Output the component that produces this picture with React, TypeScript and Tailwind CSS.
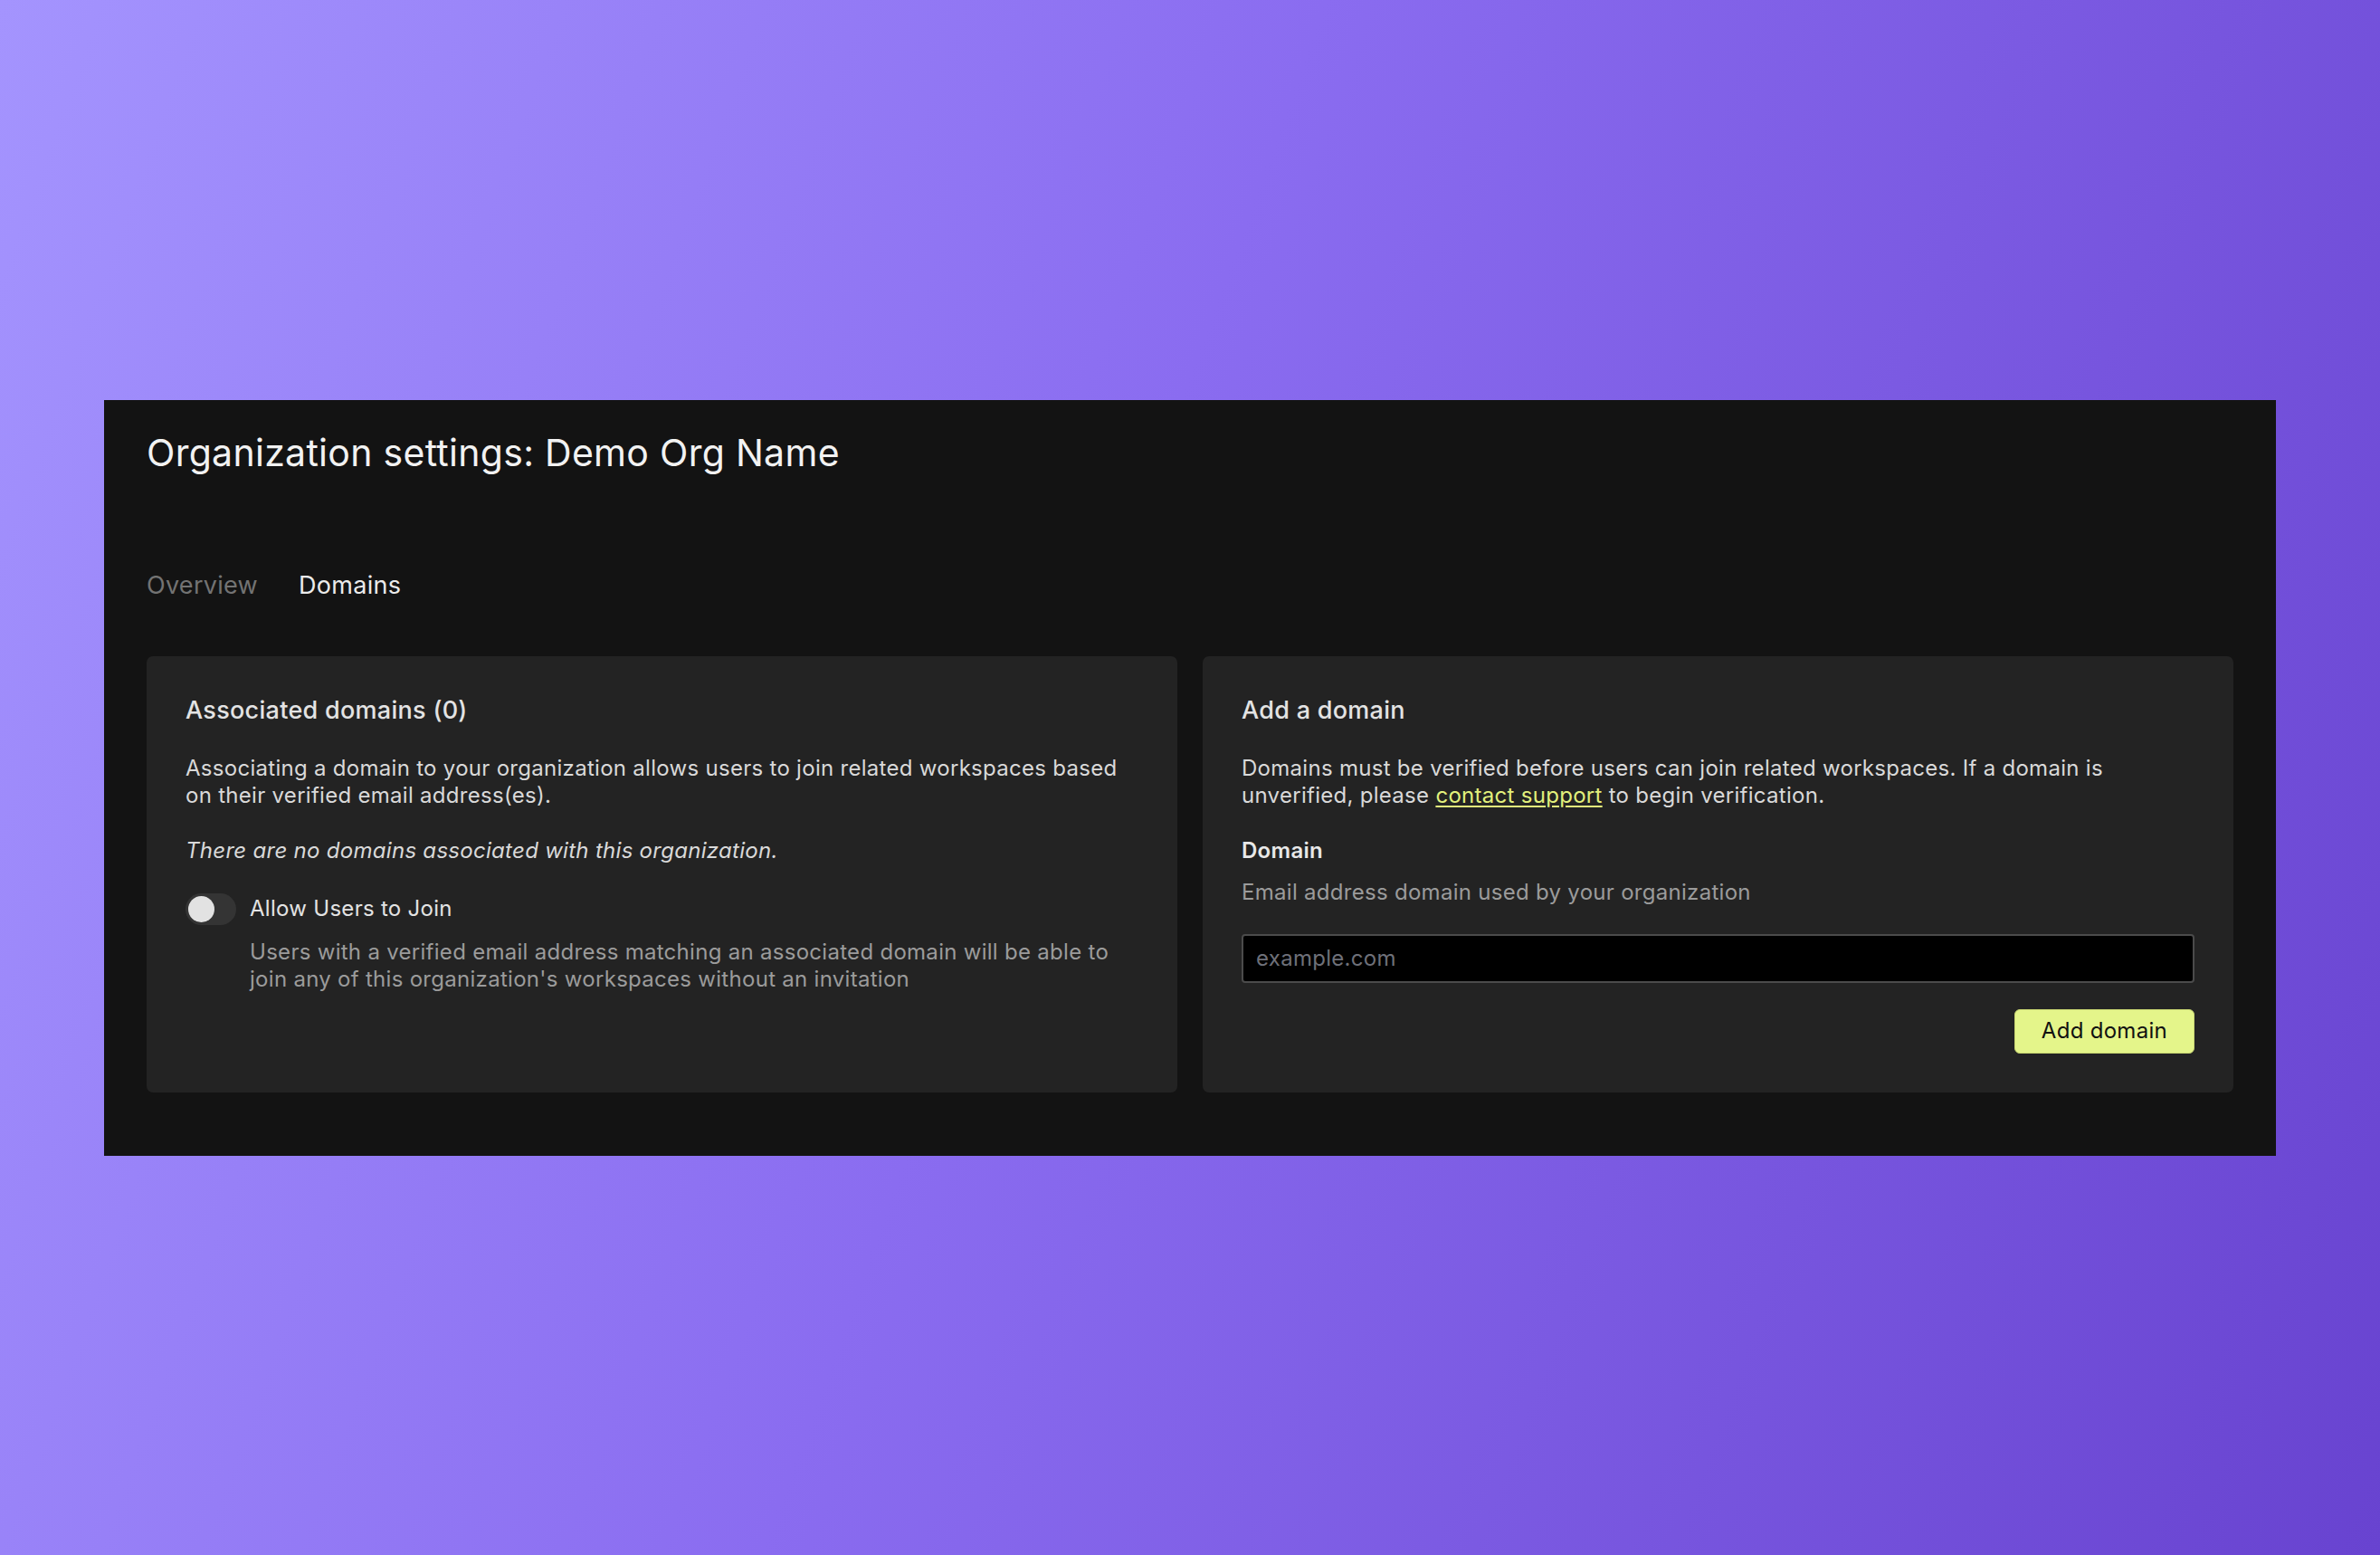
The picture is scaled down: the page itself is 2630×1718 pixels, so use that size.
import { useState } from "react";

const App: React.FC = () => {
  const [allowJoin, setAllowJoin] = useState(false);
  const [tab, setTab] = useState("domains");
  const [domain, setDomain] = useState("");

  return (
    <div className="min-h-screen w-full flex items-center justify-center bg-[linear-gradient(110deg,#a494fe_0%,#8a6cf0_45%,#6843d0_100%)] font-['Inter',sans-serif] tracking-[0.018em]">
      <div className="w-[2400px] bg-[#131313] pt-[28px] px-[47px] pb-[70px]">
        <h1 className="text-[41px] leading-[60px] font-normal text-[#f2f2f2]">
          Organization settings: Demo Org Name
        </h1>

        <div className="mt-[97px] flex gap-[45px] text-[27px] leading-[40px]">
          <button
            onClick={() => setTab("overview")}
            className={tab === "overview" ? "text-[#ebebeb]" : "text-[#737373]"}
          >
            Overview
          </button>
          <button
            onClick={() => setTab("domains")}
            className={tab === "domains" ? "text-[#ebebeb]" : "text-[#737373]"}
          >
            Domains
          </button>
        </div>

        <div className="mt-[58px] grid grid-cols-2 gap-[28px]">
          <div className="rounded-[7px] bg-[#232323] pt-[40px] px-[43px] pb-[43px]">
            <h2 className="text-[27px] leading-[40px] font-medium text-[#e3e3e3]">
              Associated domains (0)
            </h2>
            <p className="mt-[29px] text-[24px] leading-[30px] text-[#d9d9d9]">
              Associating a domain to your organization allows users to join related workspaces based on their verified email address(es).
            </p>
            <p className="mt-[31px] text-[24px] leading-[30px] italic text-[#d9d9d9]">
              There are no domains associated with this organization.
            </p>
            <div className="mt-[32px] flex items-center gap-[15px]">
              <button
                onClick={() => setAllowJoin(!allowJoin)}
                className={`relative h-[35px] w-[56px] shrink-0 rounded-full ${allowJoin ? "bg-[#e4f58a]" : "bg-[#343434]"}`}
              >
                <span
                  className={`absolute top-[3px] h-[29px] w-[29px] rounded-full bg-[#e2e2e2] ${allowJoin ? "left-[24px]" : "left-[3px]"}`}
                ></span>
              </button>
              <span className="text-[24px] leading-[30px] text-[#e3e3e3]">Allow Users to Join</span>
            </div>
            <p className="mt-[15px] pl-[71px] text-[24px] leading-[30px] text-[#9b9b9b]">
              Users with a verified email address matching an associated domain will be able to join any of this organization's workspaces without an invitation
            </p>
          </div>

          <div className="rounded-[7px] bg-[#232323] pt-[40px] px-[43px] pb-[43px]">
            <h2 className="text-[27px] leading-[40px] font-medium text-[#e3e3e3]">Add a domain</h2>
            <p className="mt-[29px] text-[24px] leading-[30px] text-[#d9d9d9]">
              Domains must be verified before users can join related workspaces. If a domain is unverified, please{" "}
              <a href="#" className="text-[#e2f07c] underline underline-offset-[3px]">
                contact support
              </a>{" "}
              to begin verification.
            </p>
            <label className="mt-[31px] block text-[24px] leading-[30px] font-semibold text-[#e8e8e8]">Domain</label>
            <p className="mt-[16px] text-[24px] leading-[30px] text-[#9b9b9b]">
              Email address domain used by your organization
            </p>
            <input
              type="text"
              value={domain}
              onChange={(e) => setDomain(e.target.value)}
              placeholder="example.com"
              className="mt-[31px] block h-[54px] w-full rounded-[4px] border-2 border-[#4b4b4b] bg-black px-[14px] text-[24px] text-[#e3e3e3] placeholder:text-[#6e7079] outline-0"
            />
            <div className="mt-[29px] flex justify-end">
              <button className="h-[49px] rounded-[6px] border border-[#c8d672] bg-[#e4f58a] px-[29px] text-[24px] text-[#111111]">
                Add domain
              </button>
            </div>
          </div>
        </div>
      </div>
    </div>
  );
};

export default App;
